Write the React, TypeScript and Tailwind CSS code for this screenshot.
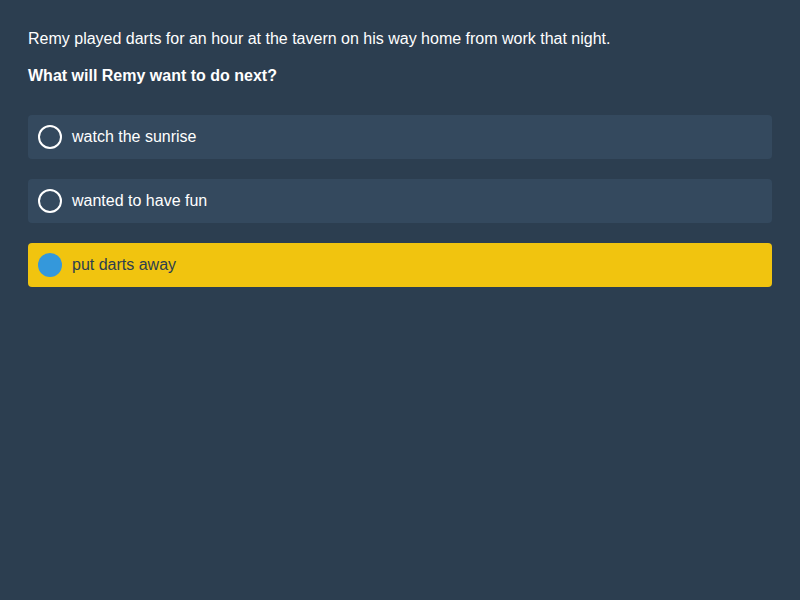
import { useState } from "react";

const options = ["watch the sunrise", "wanted to have fun", "put darts away"];

export default function App() {
	const [selected, setSelected] = useState(2);

	return (
		<div className="min-h-[600px] w-full bg-[#2c3e50] px-7 pt-[30px] font-['Liberation_Sans',Arial,sans-serif] text-white">
			<p className="text-base leading-[18px]">
				Remy played darts for an hour at the tavern on his way home from work that night.
			</p>
			<p className="mt-[19px] text-base font-bold leading-[18px]">What will Remy want to do next?</p>

			<div className="mt-[30px] flex flex-col gap-5">
				{options.map((option, index) => {
					const active = selected === index;
					return (
						<button
							key={index}
							onClick={() => setSelected(index)}
							className={
								active
									? "flex h-11 w-full items-center gap-[10px] rounded bg-[#f1c40f] pl-[10px] text-left text-[#2c3e50]"
									: "flex h-11 w-full items-center gap-[10px] rounded bg-[#34495e] pl-[10px] text-left text-white"
							}
						>
							{active ? (
								<span className="block h-6 w-6 rounded-full bg-[#3498db]" />
							) : (
								<span className="block h-6 w-6 rounded-full border-2 border-white" />
							)}
							<span className="text-base">{option}</span>
						</button>
					);
				})}
			</div>
		</div>
	);
}
